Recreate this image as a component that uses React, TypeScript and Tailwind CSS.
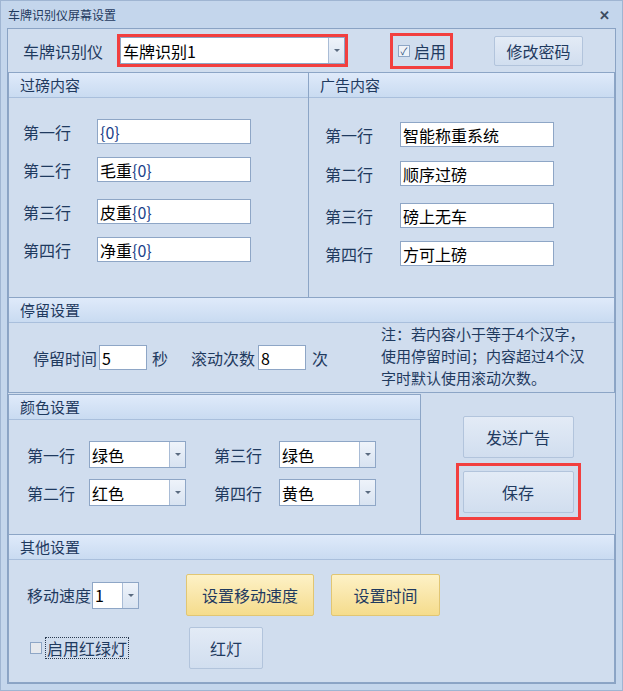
const FONT = { fontFamily: '"Noto Sans CJK SC", "Noto Sans", sans-serif' }

function Panel({ title, className, children }: { title: string; className?: string; children: React.ReactNode }) {
  return (
    <div className={`border border-[#8ca5c6] bg-[#d0ddee] flex flex-col ${className ?? ''}`}>
      <div className="h-[25px] shrink-0 flex items-center pl-[11px] bg-gradient-to-b from-[#dfeafa] to-[#c9dbf1] border-b border-[#a9bfdc] text-[15px] text-[#1f3a5f]">
        {title}
      </div>
      {children}
    </div>
  )
}

function TextBox({ value, className }: { value: React.ReactNode; className?: string }) {
  return (
    <div className={`h-[25px] bg-white border border-[#8ea6c6] flex items-center px-[2px] text-[16px] text-black ${className ?? ''}`}>
      {value}
    </div>
  )
}

function Combo({ value, className }: { value: string; className?: string }) {
  return (
    <div className={`h-[27px] bg-white border border-[#8ea6c6] flex ${className ?? ''}`}>
      <div className="flex-1 flex items-center px-[2px] text-[16px] text-black overflow-hidden">{value}</div>
      <div className="w-[16px] border-l border-[#a9bcd6] bg-gradient-to-b from-[#eef3fa] to-[#d8e3f1] flex items-center justify-center">
        <div className="w-0 h-0 border-l-[3px] border-r-[3px] border-t-[3px] border-l-transparent border-r-transparent border-t-[#5a6b80]" />
      </div>
    </div>
  )
}

function Btn({ label, className, yellow }: { label: string; className?: string; yellow?: boolean }) {
  const skin = yellow
    ? 'bg-gradient-to-b from-[#fdf1c6] to-[#f5dc8c] border-[#e1c673]'
    : 'bg-gradient-to-b from-[#e3ebf6] to-[#d1deef] border-[#b2c4dc]'
  return (
    <div className={`border rounded-[2px] flex items-center justify-center text-[16px] text-[#1f3a5f] ${skin} ${className ?? ''}`}>
      {label}
    </div>
  )
}

const Zero = () => <span className="text-[#1a3f8a]">{'{0}'}</span>

export default function App() {
  const leftRows = [
    { label: '第一行', value: <Zero />, mt: 'mt-[21px]' },
    { label: '第二行', value: <>毛重<Zero /></>, mt: 'mt-[13px]' },
    { label: '第三行', value: <>皮重<Zero /></>, mt: 'mt-[17px]' },
    { label: '第四行', value: <>净重<Zero /></>, mt: 'mt-[13px]' },
  ]
  const rightRows = [
    { label: '第一行', value: '智能称重系统', mt: 'mt-[24px]' },
    { label: '第二行', value: '顺序过磅', mt: 'mt-[14px]' },
    { label: '第三行', value: '磅上无车', mt: 'mt-[17px]' },
    { label: '第四行', value: '方可上磅', mt: 'mt-[13px]' },
  ]

  return (
    <div style={FONT} className="w-[623px] h-[691px] bg-[#c4d6ec] flex flex-col text-[#1f3a5f] border border-[#9fb5d2]">
      {/* title bar */}
      <div className="h-[27px] shrink-0 flex items-center justify-between pl-[7px] pr-[12px]">
        <span className="text-[12px] text-[#1f3a5f]">车牌识别仪屏幕设置</span>
        <span className="text-[13px] font-bold text-[#3d4c60]">✕</span>
      </div>

      <div className="ml-[6px] w-[609px] h-[656px] border border-[#8aa3c4] bg-[#d0ddee] flex flex-col">
        {/* top row */}
        <div className="h-[43px] shrink-0 flex items-center">
          <span className="ml-[15px] text-[16px]">车牌识别仪</span>
          <div className="ml-[14px] border-[3px] border-[#f23f3f]">
            <Combo value="车牌识别1" className="w-[225px] h-[25px]" />
          </div>
          <div className="ml-[42px] h-[36px] w-[63px] border-[3px] border-[#f23f3f] flex items-center">
            <div className="ml-[5px] w-[12px] h-[12px] border border-[#8ea6c6] bg-[#eef2f8] flex items-center justify-center text-[10px] leading-none text-[#2a4a78]">✓</div>
            <span className="ml-[4px] text-[16px]">启用</span>
          </div>
          <Btn label="修改密码" className="ml-[41px] w-[89px] h-[30px]" />
        </div>

        {/* content panels */}
        <div className="h-[226px] shrink-0 flex">
          <Panel title="过磅内容" className="w-[301px]">
            <div className="flex flex-col">
              {leftRows.map((r) => (
                <div key={r.label} className={`flex items-center ${r.mt}`}>
                  <span className="ml-[14px] w-[74px] text-[16px]">{r.label}</span>
                  <TextBox value={r.value} className="w-[154px]" />
                </div>
              ))}
            </div>
          </Panel>
          <Panel title="广告内容" className="flex-1 -ml-px">
            <div className="flex flex-col">
              {rightRows.map((r) => (
                <div key={r.label} className={`flex items-center ${r.mt}`}>
                  <span className="ml-[16px] w-[75px] text-[16px]">{r.label}</span>
                  <TextBox value={r.value} className="w-[154px]" />
                </div>
              ))}
            </div>
          </Panel>
        </div>

        {/* stay settings */}
        <Panel title="停留设置" className="h-[96px] shrink-0 -mt-px">
          <div className="flex-1 flex items-center">
            <span className="ml-[24px] text-[16px]">停留时间</span>
            <TextBox value="5" className="ml-[2px] w-[48px]" />
            <span className="ml-[5px] text-[16px]">秒</span>
            <span className="ml-[23px] text-[16px]">滚动次数</span>
            <TextBox value="8" className="ml-[3px] w-[48px]" />
            <span className="ml-[6px] text-[16px]">次</span>
            <p className="ml-[53px] -mt-[4px] w-[212px] text-[15px] leading-[22px] text-[#1f3a5f]">
              注：若内容小于等于4个汉字，使用停留时间；内容超过4个汉字时默认使用滚动次数。
            </p>
          </div>
        </Panel>

        {/* colours + buttons */}
        <div className="h-[143px] shrink-0 flex -mt-px">
          <Panel title="颜色设置" className="w-[413px] mt-[2px]">
            <div className="grid grid-cols-[62px_97px_28px_65px_97px] items-center gap-y-[11px] mt-[21px] ml-[18px]">
              <span className="text-[16px]">第一行</span>
              <Combo value="绿色" />
              <span />
              <span className="text-[16px]">第三行</span>
              <Combo value="绿色" />
              <span className="text-[16px]">第二行</span>
              <Combo value="红色" />
              <span />
              <span className="text-[16px]">第四行</span>
              <Combo value="黄色" />
            </div>
          </Panel>
          <div className="flex-1 flex flex-col items-center">
            <Btn label="发送广告" className="mt-[24px] w-[111px] h-[42px]" />
            <div className="mt-[5px] border-[3px] border-[#f23f3f] p-[4px] pt-[5px]">
              <Btn label="保存" className="w-[111px] h-[42px]" />
            </div>
          </div>
        </div>

        {/* other settings */}
        <Panel title="其他设置" className="flex-1 -mt-px">
          <div className="flex items-center mt-[14px]">
            <span className="ml-[18px] text-[16px]">移动速度</span>
            <Combo value="1" className="ml-[1px] w-[47px] h-[27px]" />
            <Btn label="设置移动速度" yellow className="ml-[47px] w-[128px] h-[42px]" />
            <Btn label="设置时间" yellow className="ml-[17px] w-[109px] h-[42px]" />
          </div>
          <div className="flex items-center mt-[11px]">
            <div className="ml-[21px] w-[12px] h-[12px] border border-[#8ea6c6] bg-[#e6e9ee]" />
            <span className="ml-[3px] text-[16px] border border-dotted border-[#2a3a50] leading-[20px] px-[1px]">启用红绿灯</span>
            <Btn label="红灯" className="ml-[60px] w-[74px] h-[42px]" />
          </div>
        </Panel>
      </div>
    </div>
  )
}
